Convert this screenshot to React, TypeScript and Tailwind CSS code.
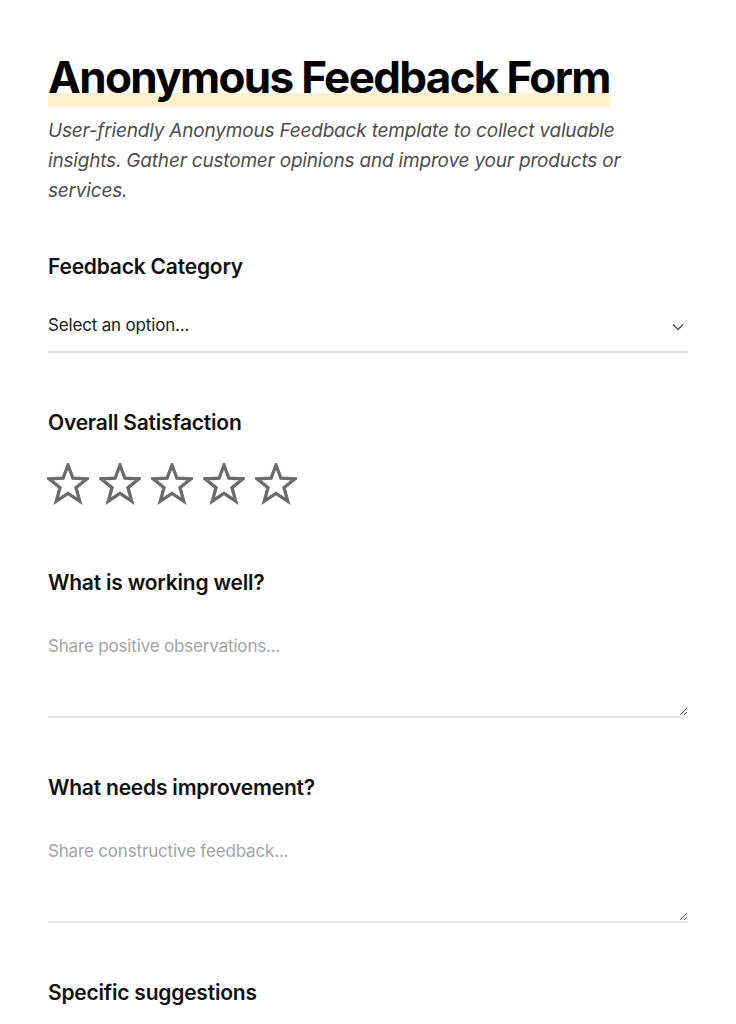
import { useState } from "react";

const CATEGORIES = ["Product", "Service", "Support", "Website", "Other"];

function StarIcon({ filled }: { filled: boolean }) {
  return (
    <svg width="42" height="42" viewBox="0 0 42 42" fill={filled ? "#6b6b6b" : "none"}>
      <polygon
        points="21,2 25.9,15.2 40,15.8 29,24.6 32.7,38.2 21,30.4 9.3,38.2 13,24.6 2,15.8 16.1,15.2"
        stroke="#6b6b6b"
        strokeWidth="3.3"
        strokeLinejoin="miter"
      />
    </svg>
  );
}

function Label({ children }: { children: React.ReactNode }) {
  return <h2 className="text-[21px] leading-7 font-semibold text-[#111] tracking-[-0.01em]">{children}</h2>;
}

const textareaClass =
  "w-full h-[97px] py-3 bg-transparent border-0 border-b-2 border-[#e6e6e6] text-[17px] leading-[27px] tracking-[-0.01em] text-[#1a1a1a] placeholder:text-[#a3a3a3] outline-none";

export default function App() {
  const [category, setCategory] = useState("");
  const [rating, setRating] = useState(0);

  return (
    <div className="min-h-screen bg-white px-12 pt-[51px] pb-16 font-['Inter',sans-serif]">
      {/* Header */}
      <h1 className="text-[44px] leading-[53px] font-bold text-black tracking-[-0.038em]">
        <span className="inline-block pb-[3px] shadow-[inset_0_-14px_0_#fdf2cc]">Anonymous Feedback Form</span>
      </h1>
      <p className="mt-[9px] max-w-[620px] text-[19px] leading-[30px] italic text-[#4d4d4d] tracking-[-0.01em]">
        User-friendly Anonymous Feedback template to collect valuable insights. Gather customer opinions and improve your products or services.
      </p>

      <form className="mt-[47px] flex flex-col gap-14" onSubmit={(e) => e.preventDefault()}>
        {/* Category */}
        <div className="flex flex-col gap-5">
          <Label>Feedback Category</Label>
          <div className="relative">
            <select
              value={category}
              onChange={(e) => setCategory(e.target.value)}
              className="w-full h-[52px] appearance-none bg-transparent border-0 border-b-2 border-[#e6e6e6] pr-8 text-[17px] tracking-[-0.01em] text-[#1a1a1a] outline-none"
            >
              <option value="">Select an option...</option>
              {CATEGORIES.map((c) => (
                <option key={c} value={c}>{c}</option>
              ))}
            </select>
            <svg
              className="pointer-events-none absolute right-[4px] top-[22px]"
              width="12"
              height="8"
              viewBox="0 0 12 8"
              fill="none"
            >
              <path d="M1 1.5l5 5 5-5" stroke="#555" strokeWidth="1.5" />
            </svg>
          </div>
        </div>

        {/* Rating */}
        <div className="flex flex-col gap-[26px] mb-2">
          <Label>Overall Satisfaction</Label>
          <div className="flex gap-[10px] -ml-[1px]">
            {[1, 2, 3, 4, 5].map((n) => (
              <button key={n} type="button" onClick={() => setRating(n)} aria-label={`${n} stars`}>
                <StarIcon filled={n <= rating} />
              </button>
            ))}
          </div>
        </div>

        {/* Working well */}
        <div className="flex flex-col gap-6">
          <Label>What is working well?</Label>
          <textarea placeholder="Share positive observations..." className={textareaClass} />
        </div>

        {/* Improvement */}
        <div className="flex flex-col gap-6">
          <Label>What needs improvement?</Label>
          <textarea placeholder="Share constructive feedback..." className={textareaClass} />
        </div>

        {/* Suggestions */}
        <div className="flex flex-col gap-6">
          <Label>Specific suggestions</Label>
          <textarea placeholder="Share specific ideas..." className={textareaClass} />
        </div>
      </form>
    </div>
  );
}
